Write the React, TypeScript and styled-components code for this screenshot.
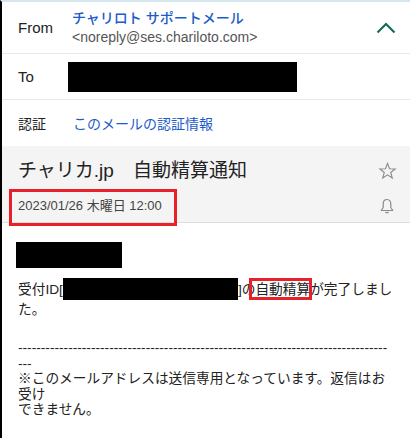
import styled, { createGlobalStyle } from "styled-components";

const GlobalStyle = createGlobalStyle`
  html, body {
    margin: 0;
    padding: 0;
    background: #fff;
  }
  body {
    font-family: "Liberation Sans", "Noto Sans CJK JP", sans-serif;
    color: #222;
  }
`;

const Page = styled.div`
  min-height: 438px;
  box-sizing: border-box;
  border-left: 2px solid #000;
  border-top: 2px solid #d6e6ee;
  overflow: hidden;
`;

const HeaderRow = styled.div<{ h: number }>`
  display: grid;
  grid-template-columns: 54px 1fr auto;
  align-items: center;
  height: ${(p) => p.h}px;
  box-sizing: border-box;
  padding: 0 14px 0 16px;
  border-bottom: 1px solid #e8e8e8;
`;

const Label = styled.div<{ size?: number }>`
  font-size: ${(p) => p.size || 15}px;
  color: #222;
`;

const Sender = styled.div`
  display: flex;
  flex-direction: column;
  line-height: 19px;
`;

const SenderName = styled.span`
  font-size: 14px;
  font-weight: 500;
  color: #1b5cc8;
`;

const SenderAddress = styled.span`
  font-size: 14px;
  color: #555;
`;

const Redacted = styled.div<{ w: number; h: number }>`
  width: ${(p) => p.w}px;
  height: ${(p) => p.h}px;
  background: #000;
`;

const ToRedacted = styled(Redacted)`
  margin-left: -4px;
`;

const AuthLink = styled.a`
  font-size: 14px;
  color: #1b5cc8;
  text-decoration: none;
  margin-left: 1px;
`;

const SubjectBlock = styled.div`
  display: grid;
  grid-template-columns: 1fr auto;
  grid-template-rows: 26px 18px;
  row-gap: 13px;
  align-items: center;
  padding: 12px 13px 7px 16px;
  background: #f4f4f4;
  border-bottom: 1px solid #dedede;
`;

const Subject = styled.div`
  font-size: 19px;
  line-height: 26px;
  color: #222;
  white-space: nowrap;
`;

const DateLine = styled.div`
  font-size: 13px;
  line-height: 18px;
  color: #444;
`;

const DateText = styled.span`
  position: relative;
`;

const DateMark = styled.span`
  position: absolute;
  top: -9px;
  bottom: -13px;
  left: -9px;
  right: -15px;
  border: 3px solid #e8202a;
  pointer-events: none;
`;

const IconCell = styled.div`
  display: flex;
  justify-content: center;
  width: 20px;
`;

const Body = styled.div`
  padding: 19px 12px 0 16px;
  font-size: 13.7px;
  color: #222;
`;

const NameRedacted = styled(Redacted)`
  margin-left: -2px;
`;

const Paragraph = styled.p`
  margin: 11px 0 0;
  line-height: 20px;
`;

const InlineRedacted = styled.span`
  display: inline-block;
  width: 175px;
  height: 20px;
  background: #000;
  vertical-align: -5px;
  box-shadow: 0 -1px 0 #000, 0 1px 0 #000;
`;

const Marked = styled.span`
  position: relative;
  &::after {
    content: "";
    position: absolute;
    top: -4px;
    bottom: -3px;
    left: -6px;
    right: -2px;
    border: 3px solid #e8202a;
  }
`;

const Notice = styled.p`
  margin: 20px 0 0;
  line-height: 15.5px;
  word-break: break-all;
`;

function ChevronUp() {
  return (
    <svg width="20" height="12" viewBox="0 0 20 12">
      <path d="M1.5 10.5 L10 2 L18.5 10.5" fill="none" stroke="#0d6b56" strokeWidth="2" />
    </svg>
  );
}

function Star() {
  return (
    <svg width="19" height="18" viewBox="0 0 24 23">
      <path
        d="M12 1.8 L14.6 8.6 L21.8 8.9 L16.1 13.4 L18.1 20.4 L12 16.4 L5.9 20.4 L7.9 13.4 L2.2 8.9 L9.4 8.6 Z"
        fill="none"
        stroke="#8a8a8a"
        strokeWidth="1.4"
        strokeLinejoin="miter"
      />
    </svg>
  );
}

function Bell() {
  return (
    <svg width="14" height="17" viewBox="0 0 14 17">
      <path
        d="M7 1.5 C4.3 1.5 3.2 3.6 3.2 6 L3.2 9.5 L1.2 12.5 L12.8 12.5 L10.8 9.5 L10.8 6 C10.8 3.6 9.7 1.5 7 1.5 Z"
        fill="none"
        stroke="#8a8a8a"
        strokeWidth="1.2"
        strokeLinejoin="round"
      />
      <path d="M5.3 14.5 L8.7 14.5" stroke="#8a8a8a" strokeWidth="1.3" />
    </svg>
  );
}

const dashes = "-".repeat(81);

export default function App() {
  return (
    <>
      <GlobalStyle />
      <Page>
        <HeaderRow h={52}>
          <Label>From</Label>
          <Sender>
            <SenderName>チャリロト サポートメール</SenderName>
            <SenderAddress>&lt;noreply@ses.chariloto.com&gt;</SenderAddress>
          </Sender>
          <ChevronUp />
        </HeaderRow>
        <HeaderRow h={46}>
          <Label>To</Label>
          <ToRedacted w={229} h={30} />
          <span />
        </HeaderRow>
        <HeaderRow h={46} style={{ borderBottom: "none" }}>
          <Label size={14}>認証</Label>
          <AuthLink href="#">このメールの認証情報</AuthLink>
          <span />
        </HeaderRow>
        <SubjectBlock>
          <Subject>チャリカ.jp　自動精算通知</Subject>
          <IconCell>
            <Star />
          </IconCell>
          <DateLine>
            <DateText>
              2023/01/26 木曜日 12:00
              <DateMark />
            </DateText>
          </DateLine>
          <IconCell>
            <Bell />
          </IconCell>
        </SubjectBlock>
        <Body>
          <NameRedacted w={106} h={26} />
          <Paragraph>
            受付ID[<InlineRedacted />]の<Marked>自動精算</Marked>が完了しまし
            <br />
            た。
          </Paragraph>
          <Notice>
            {dashes}
            <br />
            ---
            <br />
            ※このメールアドレスは送信専用となっています。返信はお
            <br />
            受け
            <br />
            できません。
          </Notice>
        </Body>
      </Page>
    </>
  );
}
